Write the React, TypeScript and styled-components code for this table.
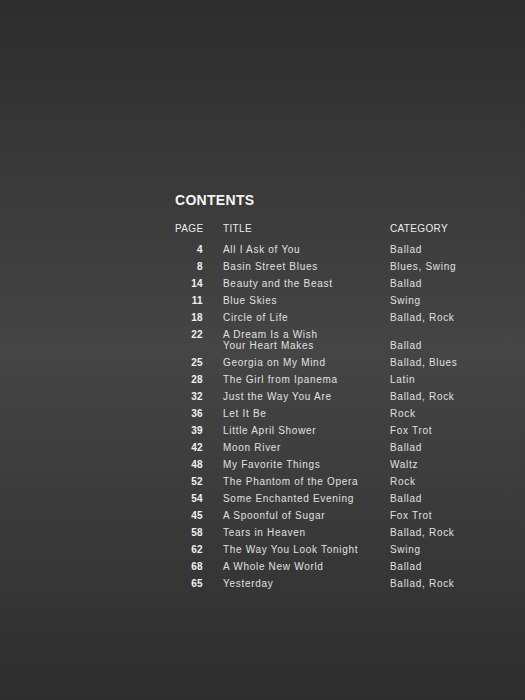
import * as React from 'react';
import styled, { createGlobalStyle } from 'styled-components';

const GlobalStyle = createGlobalStyle`
  html, body {
    margin: 0;
    padding: 0;
  }
  body {
    font-family: "Liberation Sans", Arial, Helvetica, sans-serif;
  }
`;

const Page = styled.div`
  width: 525px;
  height: 700px;
  box-sizing: border-box;
  padding: 192px 0 0 175px;
  background: linear-gradient(#2d2d2d 0%, #454545 50%, #2e2e2e 100%);
  color: #dedede;
`;

const Heading = styled.h1`
  margin: 0;
  font-size: 14px;
  line-height: 16px;
  font-weight: bold;
  letter-spacing: 0.3px;
  color: #f4f4f4;
`;

const Table = styled.div`
  margin-top: 15px;
  display: flex;
  flex-direction: column;
`;

const Row = styled.div<{ $head?: boolean }>`
  display: grid;
  grid-template-columns: 48px 167px auto;
  font-size: 10px;
  line-height: 11px;
  padding: ${(p) => (p.$head ? '0 0 7px' : '3px 0')};
  letter-spacing: ${(p) => (p.$head ? '0.35px' : '0.7px')};
  color: ${(p) => (p.$head ? '#ececec' : '#e0e0e0')};
`;

const Num = styled.span<{ $head?: boolean }>`
  align-self: start;
  text-align: ${(p) => (p.$head ? 'left' : 'right')};
  padding-right: ${(p) => (p.$head ? '0' : '20px')};
  font-weight: ${(p) => (p.$head ? 'normal' : 'bold')};
  letter-spacing: 0.35px;
  color: ${(p) => (p.$head ? '#ececec' : '#f0f0f0')};
`;

const Title = styled.span`
  align-self: start;
`;

const Category = styled.span`
  align-self: end;
`;

const songs: [string, string[], string][] = [
  ['4', ['All I Ask of You'], 'Ballad'],
  ['8', ['Basin Street Blues'], 'Blues, Swing'],
  ['14', ['Beauty and the Beast'], 'Ballad'],
  ['11', ['Blue Skies'], 'Swing'],
  ['18', ['Circle of Life'], 'Ballad, Rock'],
  ['22', ['A Dream Is a Wish', 'Your Heart Makes'], 'Ballad'],
  ['25', ['Georgia on My Mind'], 'Ballad, Blues'],
  ['28', ['The Girl from Ipanema'], 'Latin'],
  ['32', ['Just the Way You Are'], 'Ballad, Rock'],
  ['36', ['Let It Be'], 'Rock'],
  ['39', ['Little April Shower'], 'Fox Trot'],
  ['42', ['Moon River'], 'Ballad'],
  ['48', ['My Favorite Things'], 'Waltz'],
  ['52', ['The Phantom of the Opera'], 'Rock'],
  ['54', ['Some Enchanted Evening'], 'Ballad'],
  ['45', ['A Spoonful of Sugar'], 'Fox Trot'],
  ['58', ['Tears in Heaven'], 'Ballad, Rock'],
  ['62', ['The Way You Look Tonight'], 'Swing'],
  ['68', ['A Whole New World'], 'Ballad'],
  ['65', ['Yesterday'], 'Ballad, Rock'],
];

function App() {
  return (
    <Page>
      <GlobalStyle />
      <Heading>CONTENTS</Heading>
      <Table>
        <Row $head>
          <Num $head>PAGE</Num>
          <Title>TITLE</Title>
          <Category>CATEGORY</Category>
        </Row>
        {songs.map(([page, lines, cat]) => (
          <Row key={page}>
            <Num>{page}</Num>
            <Title>
              {lines.map((l, i) => (
                <div key={i}>{l}</div>
              ))}
            </Title>
            <Category>{cat}</Category>
          </Row>
        ))}
      </Table>
    </Page>
  );
}

export default App;
